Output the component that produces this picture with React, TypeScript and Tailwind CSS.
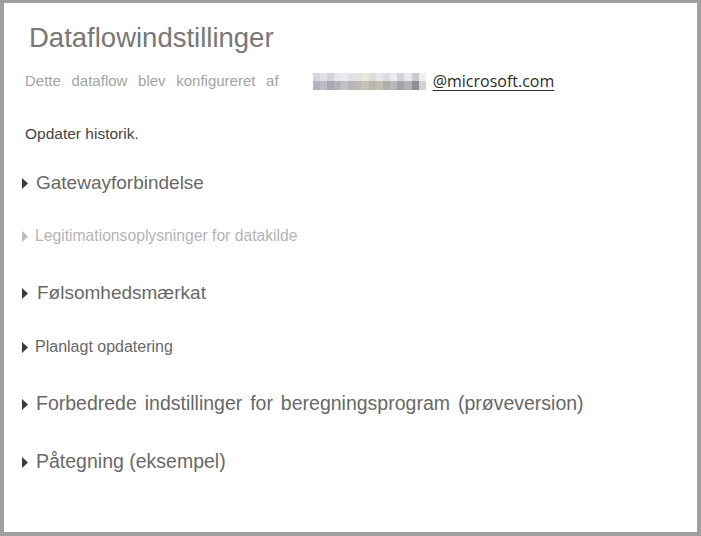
import React from "react";

function Tri({ light }: { light?: boolean }) {
  return (
    <svg width="6" height="11" viewBox="0 0 6 11" className="shrink-0">
      <path d="M0 0 L6 5.5 L0 11 Z" fill={light ? "#bdbdbd" : "#3a3a3a"} />
    </svg>
  );
}

const top = [
  "#d6d6de", "#e2e0e8", "#d4d2de", "#e6e6ee", "#eceaf0", "#e2e0e8", "#e4e0da", "#ebe7e0",
  "#dedcda", "#e8e6e8", "#dcdce2", "#ececf0", "#d2d2d8", "#e8e8ec", "#cacace", "#f0f0f0",
];
const bottom = [
  "#b2b2ba", "#bcbcc4", "#a8a8b2", "#b2b4ba", "#c2c2c6", "#b6b6ba", "#bebbb2", "#c6c2b6",
  "#b8b6ae", "#c2beb6", "#aeaeaa", "#b8b8bc", "#a2a2a6", "#b2b2b6", "#8e8e94", "#d2d2d6",
];

function Mosaic() {
  return (
    <div className="ml-[34px] w-[113px] h-[17px] grid grid-cols-16 grid-rows-2">
      {top.map((c, i) => (
        <div key={"t" + i} style={{ backgroundColor: c }} />
      ))}
      {bottom.map((c, i) => (
        <div key={"b" + i} style={{ backgroundColor: c }} />
      ))}
    </div>
  );
}

export default function App() {
  return (
    <div
      className="w-[701px] h-[536px] bg-white border-[#a0a0a0] border-t-[3px] border-l-[4px] border-r-[4px] border-b-[4px] box-border overflow-hidden"
      style={{ fontFamily: '"Liberation Sans", Arial, sans-serif' }}
    >
      <div className="flex flex-col pl-[21px]">
        <div className="mt-[19px] ml-[4px] h-[32px] flex items-center text-[27.5px] text-[#777777]">
          Dataflowindstillinger
        </div>
        <div className="mt-[17px] flex items-center h-[20px]">
          <span className="text-[15px] text-[#a3a3a3] [word-spacing:6.5px]">
            Dette dataflow blev konfigureret af
          </span>
          <Mosaic />
          <span
            className="ml-[7px] text-[16px] text-[#2b2b2b] underline underline-offset-[3px]"
            style={{ fontFamily: '"Open Sans", "Noto Sans", sans-serif' }}
          >
            @microsoft.com
          </span>
        </div>
        <div className="mt-[33px] h-[20px] flex items-center text-[15.5px] text-[#444444]">
          Opdater historik.
        </div>
        <div className="mt-[27px] flex items-center gap-[8px] h-[24px] text-[19px] text-[#686868] -ml-[3px]">
          <Tri />
          <span>Gatewayforbindelse</span>
        </div>
        <div className="mt-[31px] flex items-center gap-[7px] h-[20px] text-[15.7px] text-[#b4b4b4] -ml-[3px]">
          <Tri light />
          <span>Legitimationsoplysninger for datakilde</span>
        </div>
        <div className="mt-[35px] flex items-center gap-[9px] h-[24px] text-[19px] text-[#686868] -ml-[3px]">
          <Tri />
          <span>Følsomhedsmærkat</span>
        </div>
        <div className="mt-[32px] flex items-center gap-[7px] h-[20px] text-[16px] text-[#686868] -ml-[3px]">
          <Tri />
          <span>Planlagt opdatering</span>
        </div>
        <div className="mt-[35px] flex items-center gap-[8px] h-[24px] text-[19.5px] text-[#686868] -ml-[3px] [word-spacing:2.5px]">
          <Tri />
          <span>Forbedrede indstillinger for beregningsprogram (prøveversion)</span>
        </div>
        <div className="mt-[34px] flex items-center gap-[8px] h-[24px] text-[19.5px] text-[#686868] -ml-[3px]">
          <Tri />
          <span>Påtegning (eksempel)</span>
        </div>
      </div>
    </div>
  );
}
